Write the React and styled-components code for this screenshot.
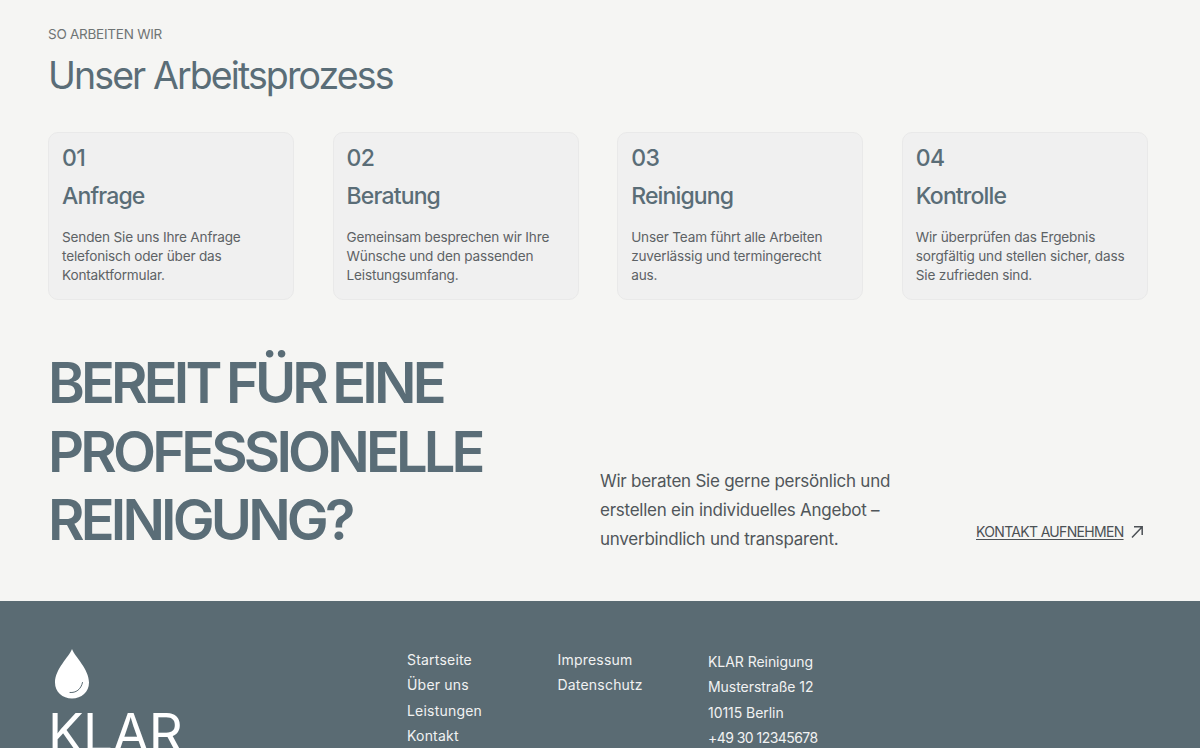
import React from "react";
import styled, { createGlobalStyle } from "styled-components";

const Global = createGlobalStyle`
  html, body { margin: 0; padding: 0; height: 748px; overflow: hidden; background: #f5f5f3; }
  body { font-family: Inter, "Noto Sans", sans-serif; }
`;

const Process = styled.section`
  padding: 26px 52px 0 48px;
`;
const Eyebrow = styled.div`
  font-size: 13.5px;
  line-height: 17px;
  color: #6f7474;
  letter-spacing: -0.25px;
`;
const Title = styled.h2`
  margin: 11px 0 0;
  font-size: 37.5px;
  line-height: 44px;
  font-weight: 400;
  letter-spacing: -1.9px;
  color: #5a6d77;
`;
const Cards = styled.div`
  display: grid;
  grid-template-columns: repeat(4, 1fr);
  gap: 38.4px;
  margin-top: 34px;
`;
const Card = styled.article`
  box-sizing: border-box;
  height: 168px;
  padding: 11px 13px 0;
  background: #f0f0f0;
  border: 1px solid #e9e9e9;
  border-radius: 10px;
`;
const Num = styled.div`
  font-size: 23px;
  line-height: 28px;
  font-weight: 500;
  color: #5a6d77;
  letter-spacing: -0.6px;
`;
const CardTitle = styled.h3`
  margin: 9px 0 0;
  font-size: 23px;
  line-height: 30px;
  font-weight: 500;
  color: #5a6d77;
  letter-spacing: -0.85px;
`;
const CardText = styled.p`
  margin: 17px 0 0;
  font-size: 13.6px;
  line-height: 19px;
  color: #5d6265;
  letter-spacing: -0.18px;
  white-space: pre-line;
`;
const Cta = styled.section`
  display: grid;
  grid-template-columns: 552px 376px 1fr;
  align-items: end;
  height: 301px;
  padding: 49px 52px 46px 48px;
  box-sizing: border-box;
`;
const Headline = styled.h1`
  margin: 0;
  font-size: 56px;
  line-height: 68.6px;
  font-weight: 600;
  letter-spacing: -3.85px;
  word-spacing: -3px;
  color: #5a6d77;
  text-transform: uppercase;
  white-space: pre-line;
`;
const Lead = styled.p`
  margin: 0 0 1px;
  font-size: 17px;
  line-height: 29px;
  color: #50565a;
  letter-spacing: -0.25px;
  white-space: pre-line;
`;
const CtaLink = styled.a`
  display: flex;
  align-items: center;
  justify-content: flex-end;
  gap: 5px;
  margin: 0 4px 13px 0;
  font-size: 14px;
  line-height: 20px;
  color: #4c5155;
  letter-spacing: -0.68px;
  text-transform: uppercase;
  white-space: nowrap;
`;
const CtaLabel = styled.span`
  text-decoration: underline;
  text-underline-offset: 2px;
`;
const Footer = styled.footer`
  display: grid;
  grid-template-columns: 359px 150.5px 150.5px 1fr;
  height: 300px;
  padding: 46px 48px 0;
  box-sizing: border-box;
  background: #5a6b73;
  color: #f1f2f2;
`;
const Brand = styled.div`
  display: flex;
  flex-direction: column;
  align-items: flex-start;
  padding-top: 2px;
`;
const Drop = styled.svg`
  width: 34px;
  height: 50px;
  margin-left: 7px;
  display: block;
`;
const Wordmark = styled.div`
  margin-top: 4px;
  font-size: 53px;
  line-height: 60px;
  font-weight: 400;
  letter-spacing: -0.5px;
  color: #fff;
`;
const NavCol = styled.nav`
  display: flex;
  flex-direction: column;
  font-size: 14px;
  line-height: 25.3px;
  letter-spacing: 0.2px;
`;
const Address = styled.address`
  font-style: normal;
  margin-top: 2px;
  font-size: 14px;
  line-height: 25.3px;
  letter-spacing: -0.05px;
  white-space: pre-line;
`;
const Phone = styled.span`
  letter-spacing: -0.55px;
`;

const steps = [
  ["01", "Anfrage", "Senden Sie uns Ihre Anfrage\ntelefonisch oder über das\nKontaktformular."],
  ["02", "Beratung", "Gemeinsam besprechen wir Ihre\nWünsche und den passenden\nLeistungsumfang."],
  ["03", "Reinigung", "Unser Team führt alle Arbeiten\nzuverlässig und termingerecht\naus."],
  ["04", "Kontrolle", "Wir überprüfen das Ergebnis\nsorgfältig und stellen sicher, dass\nSie zufrieden sind."],
];

export default function App() {
  return (
    <>
      <Global />
      <Process>
        <Eyebrow>SO ARBEITEN WIR</Eyebrow>
        <Title>Unser Arbeitsprozess</Title>
        <Cards>
          {steps.map(([n, t, d]) => (
            <Card key={n}>
              <Num>{n}</Num>
              <CardTitle>{t}</CardTitle>
              <CardText>{d}</CardText>
            </Card>
          ))}
        </Cards>
      </Process>
      <Cta>
        <Headline>{"Bereit für eine\nprofessionelle\nReinigung?"}</Headline>
        <Lead>{"Wir beraten Sie gerne persönlich und\nerstellen ein individuelles Angebot –\nunverbindlich und transparent."}</Lead>
        <CtaLink>
          <CtaLabel>Kontakt aufnehmen</CtaLabel>
          <svg width="16" height="16" viewBox="0 0 16 16" fill="none" stroke="#4c5155" strokeWidth="1.5">
            <path d="M3 13.5 13 3M5 2.8h8.2V11" />
          </svg>
        </CtaLink>
      </Cta>
      <Footer>
        <Brand>
          <Drop viewBox="0 0 34 50">
            <path d="M17 0C14 8 0 20 0 33.5 0 43 7.5 49.5 17 49.5S34 43 34 33.5C34 20 20 8 17 0Z" fill="#fff" />
            <path d="M15 43.5c6 .5 11-3 12.5-10" fill="none" stroke="#5a6b73" strokeWidth="1" strokeLinecap="round" />
          </Drop>
          <Wordmark>KLAR</Wordmark>
        </Brand>
        <NavCol>
          <span>Startseite</span>
          <span>Über uns</span>
          <span>Leistungen</span>
          <span>Kontakt</span>
        </NavCol>
        <NavCol>
          <span>Impressum</span>
          <span>Datenschutz</span>
        </NavCol>
        <Address>
          {"KLAR Reinigung\nMusterstraße 12\n10115 Berlin\n"}
          <Phone>+49 30 12345678</Phone>
        </Address>
      </Footer>
    </>
  );
}
